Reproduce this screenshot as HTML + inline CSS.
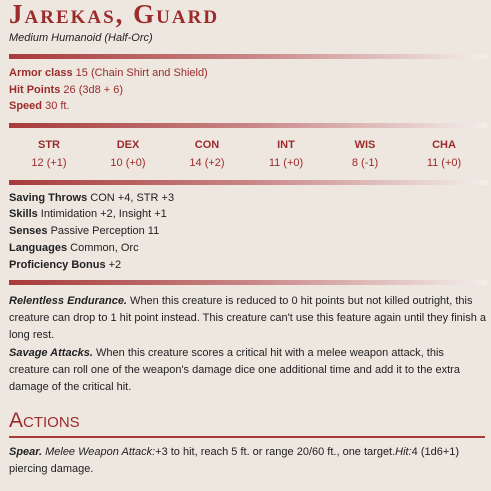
<!DOCTYPE html>
<html><head><style>
body{margin:0;width:491px;height:491px;background:#ede7e0;font-family:"Liberation Sans",sans-serif;font-size:11px;color:#222;position:relative;overflow:hidden}
.a{position:absolute;left:9px;white-space:nowrap;line-height:17px}
.r{color:#9c2b2b}
.bar{position:absolute;left:9px;width:478px;height:5px;background:linear-gradient(90deg,#a83a3a,#c88585 50%,#f3eeea)}
.h{position:absolute;left:9px;font-family:"Liberation Serif",serif;font-weight:bold;color:#9c2b2b;font-variant:small-caps}
.st{position:absolute;top:136px;width:80px;text-align:center;color:#9c2b2b;line-height:18px}
</style></head><body>
<div class="h" style="top:1px;font-size:27px;line-height:26px;letter-spacing:2px">Jarekas, Guard</div>
<div class="a" style="top:30px;font-style:italic">Medium Humanoid (Half-Orc)</div>
<div class="bar" style="top:54px"></div>
<div class="a r" style="top:65px"><b>Armor class</b> 15 (Chain Shirt and Shield)</div>
<div class="a r" style="top:82px"><b>Hit Points</b> 26 (3d8 + 6)</div>
<div class="a r" style="top:98px"><b>Speed</b> 30 ft.</div>
<div class="bar" style="top:123px"></div>
<div class="st" style="left:9px"><b>STR</b><br>12 (+1)</div>
<div class="st" style="left:88px"><b>DEX</b><br>10 (+0)</div>
<div class="st" style="left:167px"><b>CON</b><br>14 (+2)</div>
<div class="st" style="left:246px"><b>INT</b><br>11 (+0)</div>
<div class="st" style="left:325px"><b>WIS</b><br>8 (-1)</div>
<div class="st" style="left:404px"><b>CHA</b><br>11 (+0)</div>
<div class="bar" style="top:180px"></div>
<div class="a" style="top:190px"><b>Saving Throws</b> CON +4, STR +3</div>
<div class="a" style="top:206px"><b>Skills</b> Intimidation +2, Insight +1</div>
<div class="a" style="top:223px"><b>Senses</b> Passive Perception 11</div>
<div class="a" style="top:240px"><b>Languages</b> Common, Orc</div>
<div class="a" style="top:257px"><b>Proficiency Bonus</b> +2</div>
<div class="bar" style="top:280px"></div>
<div class="a" style="top:293px;white-space:normal;width:478px"><b><i>Relentless Endurance.</i></b> When this creature is reduced to 0 hit points but not killed outright, this creature can drop to 1 hit point instead. This creature can't use this feature again until they finish a long rest.</div>
<div class="a" style="top:345px;white-space:normal;width:478px"><b><i>Savage Attacks.</i></b> When this creature scores a critical hit with a melee weapon attack, this creature can roll one of the weapon's damage dice one additional time and add it to the extra damage of the critical hit.</div>
<div class="h" style="top:410px;font-size:21px;line-height:22px;font-family:'Liberation Sans',sans-serif;font-weight:normal">Actions</div>
<div style="position:absolute;left:9px;top:436px;width:476px;height:2px;background:#a83a3a"></div>
<div class="a" style="top:444px;white-space:normal;width:478px"><b><i>Spear.</i></b> <i>Melee Weapon Attack:</i>+3 to hit, reach 5 ft. or range 20/60 ft., one target.<i>Hit:</i>4 (1d6+1) piercing damage.</div>
</body></html>
